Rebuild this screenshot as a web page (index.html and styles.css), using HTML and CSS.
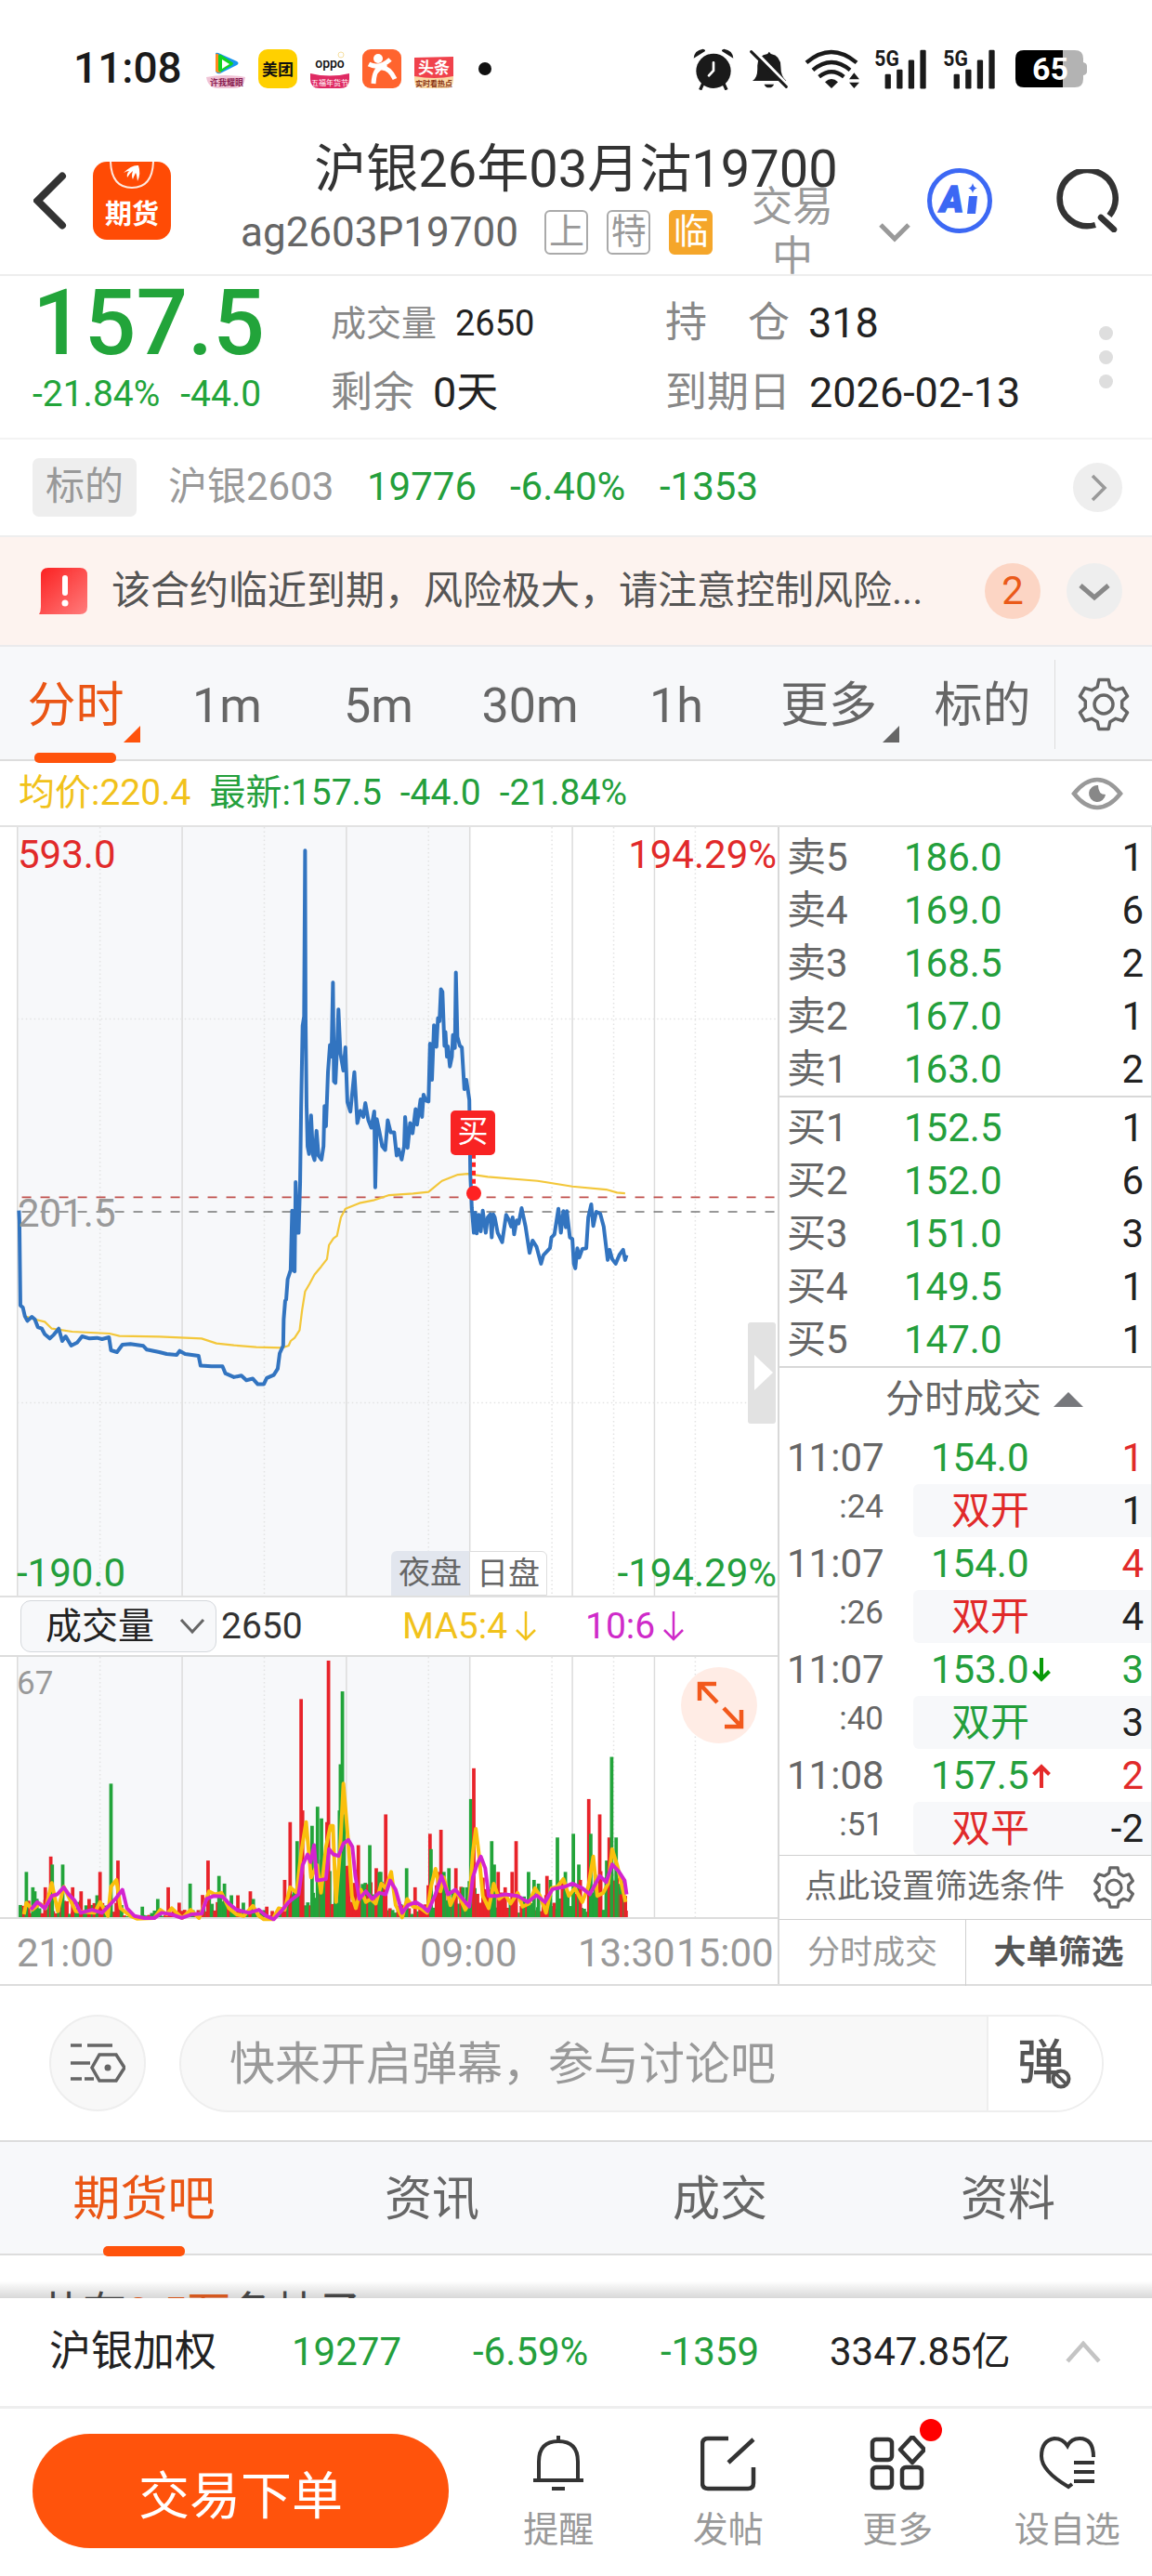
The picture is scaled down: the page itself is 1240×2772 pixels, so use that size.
FILE: index.html
```html
<!DOCTYPE html>
<html lang="zh-CN">
<head>
  <meta charset="UTF-8">
  <meta name="viewport" content="width=device-width, initial-scale=1.0">
  <title>沪银26年03月沽19700</title>
  <link rel="stylesheet" href="styles.css">
</head>
<body>
  <svg class="defs" width="0" height="0">
    <symbol id="gear" viewBox="0 0 60 60">
      <path d="M24.8 3.5H35.2L36.8 11.2L42.9 14.7L50.4 12.3L55.5 21.2L49.7 26.5V33.5L55.5 38.8L50.4 47.7L42.9 45.3L36.8 48.8L35.2 56.5H24.8L23.2 48.8L17.1 45.3L9.6 47.7L4.5 38.8L10.3 33.5V26.5L4.5 21.2L9.6 12.3L17.1 14.7L23.2 11.2Z"/>
      <circle cx="30" cy="30" r="10"/>
    </symbol>
  </svg>

  <div class="status-bar">
    <span class="clock">11:08</span>
    <div class="app-icons">
      <svg viewBox="0 0 42 42"><path d="M10 5q0-2 3-1L33 13q3 2 0 4L15 26q-4 1-5-3z" fill="#1697ee"/><path d="M10 6q0-2 3-1l3 20q-5 1-6-2z" fill="#ff8a1c"/><path d="M13 7q1-2 3-1l12 8q2 1 0 3l-12 7q-3 1-3-2z" fill="#12d321"/><path d="M17 11l8 5-8 5z" fill="#fff"/><path d="M0 30q20-4 42 0-1 12-12 12H13Q2 42 0 30z" fill="#f0c3d6"/><text x="22" y="39" font-size="9" font-weight="700" fill="#8a1c50" text-anchor="middle">许我耀眼</text></svg>
      <svg viewBox="0 0 42 42"><rect width="42" height="42" rx="10" fill="#ffd000"/><text x="21" y="28" font-size="17" font-weight="700" fill="#111" text-anchor="middle">美团</text></svg>
      <svg viewBox="0 0 42 42"><text x="21" y="20" font-size="14" font-weight="500" fill="#111" text-anchor="middle">oppo</text><circle cx="33" cy="6" r="3" fill="none" stroke="#f6dfa0"/><path d="M0 26q21 5 42 0v6q0 10-10 10H10Q0 42 0 32z" fill="#df2a63"/><text x="21" y="39" font-size="8" fill="#fff" text-anchor="middle">五福年货节</text></svg>
      <svg viewBox="0 0 42 42"><rect width="42" height="42" rx="9" fill="#ff642e"/><circle cx="17" cy="10" r="5" fill="#fff"/><path d="M7 16q11 6 23-5M12 37q1-16 8-17 9-1 15 12M17 17v5q4-4 9-6" fill="none" stroke="#fff" stroke-width="5"/></svg>
      <svg viewBox="0 0 42 42"><path d="M0 28h42v5q0 9-9 9H9q-9 0-9-9z" fill="#fbd9a5"/><path d="M0 9l42-1v21q-20 4-42 0z" fill="#f0424c"/><text x="21" y="26" font-size="17" font-weight="700" fill="#fff" text-anchor="middle">头条</text><text x="21" y="40" font-size="8" font-weight="700" fill="#8a3413" text-anchor="middle">实时看热点</text></svg>
    </div>
    <span class="more-dot"></span>
    <div class="sys-icons">
      <svg class="alarm" viewBox="80 34 132 135"><circle cx="146" cy="107" r="56"/><path d="M112 148l-9 20M179 148l9 20" stroke="#1a1a1a" stroke-width="10"/><path d="M82 66q2-26 30-30 10 2 6 8zM210 66q-2-26-30-30-10 2-6 8z"/><path d="M146 80v26l-15 16" fill="none" stroke="#fff" stroke-width="8" stroke-linecap="round"/></svg>
      <svg class="mute" viewBox="264 36 124 128"><path d="M273 138q16-10 16-38v-12q2-34 33-38l5-7 6 7q32 6 32 42 0 32 18 46z"/><path d="M311 149h32q-4 11-16 11t-16-11z"/><path d="M277 37l114 118" stroke="#fff" stroke-width="10"/><path d="M269 43l114 114" stroke="#1a1a1a" stroke-width="9" stroke-linecap="round"/></svg>
      <svg class="wifi" viewBox="440 34 180 132"><g fill="none" stroke="#1a1a1a" stroke-width="13"><path d="M446 80q80-68 162 0"/><path d="M467 104q60-50 120 0"/><path d="M487 126q40-32 80 0"/></g><path d="M506 143q21-20 42 0l-21 20zM584 134l16-21 17 21zM584 144l16 19 17-19z"/></svg>
      <svg class="signal" viewBox="666 34 172 132"><text x="667" y="92" font-size="72" font-weight="700" textLength="80" lengthAdjust="spacingAndGlyphs">5G</text><rect x="701" y="117" width="19" height="48" rx="4"/><rect x="739" y="102" width="19" height="63" rx="4"/><rect x="777" y="71" width="19" height="94" rx="4"/><rect x="815" y="39" width="19" height="126" rx="4"/></svg>
      <svg class="signal" viewBox="666 34 172 132"><text x="667" y="92" font-size="72" font-weight="700" textLength="80" lengthAdjust="spacingAndGlyphs">5G</text><rect x="701" y="117" width="19" height="48" rx="4"/><rect x="739" y="102" width="19" height="63" rx="4"/><rect x="777" y="71" width="19" height="94" rx="4"/><rect x="815" y="39" width="19" height="126" rx="4"/></svg>
      <svg class="battery" viewBox="0 0 77 40"><path d="M51 0h13q9 0 9 9v4q4 1 4 4v6q0 3-4 4v4q0 9-9 9H51z" fill="#b3b3b3"/><path d="M51 0H9Q0 0 0 9v22q0 9 9 9h42z" fill="#000"/><text x="37.500" y="32" font-size="34" font-weight="700" fill="#fff" text-anchor="middle">65</text></svg>
    </div>
  </div>

  <header>
    <svg class="back" viewBox="0 0 36 62"><path d="M31 4.500L4.500 31 31 57.500" fill="none" stroke="#333" stroke-width="8" stroke-linecap="round"/></svg>
    <svg class="logo" viewBox="0 0 84 84"><rect width="84" height="84" rx="15" fill="#ff4b05"/><path d="M19 0q1 28 23 28T65 0" fill="none" stroke="#ffe9df" stroke-width="2"/><path d="M33 12Q42 3 49 4q3 9-1 17-1-8-2-9-2 4-3 7-2-3 0-9-4 3-6 7-1-4 2-7-3 0-6 2z" fill="#fff"/><text x="42" y="67" font-size="29" font-weight="700" fill="#fff" text-anchor="middle">期货</text></svg>
    <div class="titles">
      <h1>沪银26年03月沽19700</h1>
      <div class="subtitle">
        <span class="code">ag2603P19700</span>
        <span class="tag">上</span>
        <span class="tag">特</span>
        <span class="tag tag-warn">临</span>
        <span class="state">交易中</span>
        <svg class="chev" viewBox="0 0 36 22"><path d="M3 3l15 15L33 3" fill="none" stroke="#999" stroke-width="5"/></svg>
      </div>
    </div>
    <svg class="ai" viewBox="0 0 70 70"><circle cx="35" cy="35" r="32.500" fill="#fff" stroke="#3c68f4" stroke-width="5"/><text x="14" y="47" font-size="38" font-weight="900" fill="#3c68f4" stroke="#3c68f4" stroke-width="1.500" font-style="italic" textLength="25" lengthAdjust="spacingAndGlyphs">A</text><path d="M45 30h9l-2 19h-9z" fill="#3c68f4"/><path d="M49 16q1 5 5 5.500-4 .500-5 5.500-1-5-5-5.500 4-.500 5-5.500z" fill="#3c68f4"/></svg>
    <svg class="search" viewBox="0 0 68 68"><path d="M43 60A30 30 0 1 1 58 50" fill="none" stroke="#333" stroke-width="6.500"/><path d="M49 52l14 13" stroke="#333" stroke-width="6.500" stroke-linecap="round"/></svg>
  </header>

  <section class="quote">
    <div class="last">
      <div class="price">157.5</div>
      <div class="change"><span>-21.84%</span><span>-44.0</span></div>
    </div>
    <div class="col">
      <div class="item small"><span class="label">成交量</span><span>2650</span></div>
      <div class="item"><span class="label">剩余</span><span>0天</span></div>
    </div>
    <div class="col col-wide">
      <div class="item"><span class="label spread"><i>持</i><i>仓</i></span><span>318</span></div>
      <div class="item"><span class="label">到期日</span><span>2026-02-13</span></div>
    </div>
    <div class="dots"><i></i><i></i><i></i></div>
  </section>

  <section class="underlying">
    <span class="badge">标的</span>
    <span class="name">沪银2603</span>
    <span class="green u1">19776</span>
    <span class="green u2">-6.40%</span>
    <span class="green u3">-1353</span>
    <span class="round"><svg viewBox="0 0 53 53"><path d="M21 14l13 13-13 13" fill="none" stroke="#999" stroke-width="3.500"/></svg></span>
  </section>

  <section class="notice">
    <svg class="warn" viewBox="0 0 52 50"><defs><linearGradient id="wg" x1="0" y1="0" x2="1" y2="1"><stop offset="0" stop-color="#fb2020"/><stop offset="1" stop-color="#ff7c7c"/></linearGradient></defs><path d="M10 0h34q8 0 8 8v34q0 8-8 8H0q2-3 2-8V8q0-8 8-8z" fill="url(#wg)"/><path d="M28 11v16" stroke="#fff" stroke-width="6" stroke-linecap="round"/><circle cx="28" cy="38" r="3.500" fill="#fff"/></svg>
    <span class="notice-text">该合约临近到期，风险极大，请注意控制风险...</span>
    <span class="count">2</span>
    <span class="down"><svg viewBox="0 0 60 60"><path d="M15 24l15 13 15-13" fill="none" stroke="#888" stroke-width="5"/></svg></span>
  </section>

  <nav class="periods">
    <span class="p p-active">分时<svg class="tri" viewBox="0 0 18 18"><path d="M18 0v18H0z"/></svg></span>
    <span class="p">1m</span>
    <span class="p">5m</span>
    <span class="p">30m</span>
    <span class="p">1h</span>
    <span class="p">更多<svg class="tri" viewBox="0 0 18 18"><path d="M18 0v18H0z"/></svg></span>
    <span class="p">标的</span>
    <span class="setting"><svg class="gear"><use href="#gear"/></svg></span>
  </nav>

  <div class="info">
    <span class="yellow">均价:220.4</span>
    <span class="green">最新:157.5</span>
    <span class="green">-44.0</span>
    <span class="green">-21.84%</span>
    <svg class="eye" viewBox="0 0 56 36"><path d="M3 18Q15 3 28 3t25 15Q41 33 28 33T3 18z" fill="none" stroke="#999" stroke-width="4.500"/><path d="M29 9a9 9 0 1 0 8 10q-8 0-8-10z" fill="#888"/></svg>
  </div>

  <main class="trade">
    <div class="charts">
      <div class="chart price-chart">
        <svg viewBox="0 27 1562.400 2487" preserveAspectRatio="none">
          <rect x="35" y="27" width="909" height="2487" fill="#f7f8fa"/>
          <g class="grid"><path d="M35 27V2514M366 27V2514M696 27V2514M944 27V2514M1150 27V2514M1315 27V2514"/></g>
          <g class="grid dotted"><path d="M201 27V2514M531 27V2514M861 27V2514M1109 27V2514M1233 27V2514M1397 27V2514M35 648H1562M35 1890H1562"/></g>
          <path class="dash" stroke="#c0504d" d="M44 1225H1562"/>
          <path class="dash" stroke="#777" d="M44 1272H1562"/>
          <polyline class="avg" points="50,1610 70,1620 90,1628 104,1650 145,1660 220,1666 240,1674 320,1676 405,1682 435,1698 470,1704 515,1710 568,1712 580,1705 584,1690 592,1680 602,1655 607,1590 613,1530 622,1505 632,1475 645,1450 657,1425 661,1380 670,1358 677,1350 685,1290 694,1262 722,1244 750,1235 782,1218 830,1213 861,1208 888,1172 920,1152 940,1149 980,1159 1080,1172 1150,1190 1218,1200 1240,1210 1256,1212"/>
          <polyline class="line" points="38,1268 39,1300 41,1575 46,1582 50,1610 55,1625 64,1612 70,1620 76,1645 84,1650 90,1668 100,1682 108,1670 118,1650 125,1690 132,1675 143,1705 155,1695 165,1675 180,1682 195,1680 205,1684 219,1678 223,1720 235,1726 246,1702 262,1700 288,1706 295,1718 320,1726 335,1732 355,1735 361,1722 372,1732 399,1738 403,1770 425,1772 447,1772 453,1795 470,1807 485,1802 495,1817 508,1812 518,1830 530,1830 536,1810 550,1800 558,1780 562,1730 569,1705 570,1620 573,1560 575,1556 578,1490 584,1460 587,1268 589,1460 592,1465 594,1176 597,1340 600,1340 603,1180 605,940 608,670 611,640 613,103 614,640 616,930 618,1060 621,1085 625,960 629,1090 632,1105 636,1010 640,1090 646,1103 650,1060 652,930 655,995 659,820 663,732 666,770 669,530 671,850 674,855 677,750 680,617 684,760 690,815 694,740 698,917 704,948 712,820 718,985 724,945 730,965 734,920 740,975 746,1000 752,947 754,1193 757,972 762,1010 768,1060 774,1072 779,976 785,1015 792,1015 797,1090 801,1070 807,1103 812,1060 814,965 819,1065 824,985 829,1018 835,940 838,990 845,908 848,965 851,893 856,912 861,915 864,728 868,845 872,668 877,738 880,645 883,655 886,552 889,560 893,735 895,690 898,770 900,737 904,802 908,770 910,700 914,742 916,498 919,705 924,735 928,740 933,875 937,845 943,910 945,1150 948,1260 952,1340 955,1275 958,1342 962,1282 966,1335 970,1268 976,1340 980,1290 985,1280 988,1355 991,1280 994,1290 1000,1340 1009,1370 1017,1282 1023,1300 1027,1320 1030,1290 1033,1345 1038,1300 1042,1310 1048,1260 1056,1320 1064,1405 1070,1365 1078,1385 1087,1440 1092,1412 1105,1390 1108,1355 1114,1345 1122,1262 1127,1340 1132,1270 1137,1322 1139,1270 1145,1355 1150,1360 1153,1440 1156,1455 1160,1390 1164,1420 1170,1392 1178,1390 1182,1290 1188,1248 1192,1318 1198,1272 1206,1278 1213,1320 1221,1428 1225,1395 1230,1425 1237,1440 1245,1410 1252,1395 1256,1428 1259,1412"/>
          <path d="M952 1085V1195" fill="none" stroke="#f22" stroke-width="4" stroke-dasharray="5 4" vector-effect="non-scaling-stroke"/>
          <ellipse cx="952" cy="1212" rx="15" ry="24" fill="#f22"/>
        </svg>
        <span class="mark top-left red">593.0</span>
        <span class="mark top-right red">194.29%</span>
        <span class="mark middle">201.5</span>
        <span class="mark bottom-left green">-190.0</span>
        <span class="mark bottom-right green">-194.29%</span>
        <span class="buy">买</span>
        <span class="session"><b>夜盘</b><b>日盘</b></span>
        <span class="handle"><svg viewBox="0 0 20 38"><path d="M0 0l20 19L0 38z" fill="#fff"/></svg></span>
      </div>

      <div class="vol-head">
        <span class="vol-select">成交量<svg viewBox="0 0 28 18"><path d="M2 2l12 13L26 2" fill="none" stroke="#666" stroke-width="3"/></svg></span>
        <span class="vol-num">2650</span>
        <span class="ma yellow">MA5:4<svg viewBox="0 0 22 32"><path d="M11 0v30M1 20l10 10 10-10"/></svg></span>
        <span class="ma purple">10:6<svg viewBox="0 0 22 32"><path d="M11 0v30M1 20l10 10 10-10"/></svg></span>
      </div>

      <div class="chart vol-chart">
        <svg viewBox="0 213 1562.400 846" preserveAspectRatio="none">
          <rect x="35" y="213" width="909" height="846" fill="#f7f8fa"/>
          <g class="grid"><path d="M35 213V1059M366 213V1059M696 213V1059M944 213V1059M1150 213V1059M1315 213V1059"/></g>
          <g class="grid dotted"><path d="M201 213V1059M531 213V1059M861 213V1059M1109 213V1059M1233 213V1059M1397 213V1059"/></g>
          <g id="bars"></g>
          <polyline class="ma5" points="48,1050 53,1012 65,1035 80,1015 92,1030 104,948 116,1040 128,960 140,1000 152,1040 190,1045 201,1010 217,1055 223,960 234,938 242,1030 262,1055 275,1064 310,1062 322,1035 335,1050 345,1030 358,1050 366,1062 383,1035 400,1062 410,1020 420,975 432,985 445,980 460,1030 475,1050 490,1055 508,1022 520,1055 530,1066 548,1066 560,1030 572,1035 583,962 596,980 605,850 615,750 625,930 637,890 645,980 655,830 664,762 669,762 675,1010 683,850 690,625 700,820 707,990 715,1030 725,970 735,1010 745,1000 755,1015 766,950 775,965 786,912 795,1020 808,1060 818,1000 830,1025 845,1030 858,1045 866,960 875,902 885,975 892,930 905,1020 918,975 935,1035 943,1010 950,850 956,772 962,850 970,990 982,1030 992,950 1003,1000 1015,985 1026,1015 1040,980 1050,1025 1063,1015 1075,965 1085,990 1097,1045 1108,965 1120,960 1132,935 1143,990 1155,965 1170,1010 1182,960 1192,862 1200,990 1212,980 1222,950 1230,838 1240,890 1250,960 1257,1010"/>
          <polyline class="ma10" points="62,1035 75,1010 90,1030 104,990 115,985 128,962 138,985 150,1005 162,1045 185,1035 205,1045 220,1020 232,1000 246,970 255,1030 270,1055 290,1062 310,1062 325,1045 345,1050 365,1062 385,1050 405,1048 415,1000 430,990 447,992 460,1015 475,1035 500,1045 520,1035 535,1055 550,1066 565,1040 580,1010 600,985 608,890 618,855 624,880 631,825 637,940 655,935 661,838 670,855 680,860 690,820 700,808 708,830 714,925 722,1000 735,975 748,1000 762,980 775,985 784,940 795,970 808,1045 820,1020 835,1010 850,1025 860,1040 875,985 887,925 900,985 915,970 930,1000 943,1025 950,930 958,890 966,862 975,900 982,990 1000,990 1015,985 1040,990 1060,1010 1078,988 1095,1010 1110,968 1135,960 1150,950 1170,965 1185,985 1205,925 1218,945 1230,888 1243,910 1255,940 1259,985"/>
        </svg>
        <span class="vol-max">67</span>
        <span class="expand"><svg viewBox="0 0 82 82"><path d="M20 36V18h18M20 18l19 20M46 44l19 20M65 46v18H47" fill="none" stroke="#f2591c" stroke-width="4.500"/></svg></span>
      </div>

      <div class="axis">
        <span>21:00</span><span>09:00</span><span>13:30</span><span>15:00</span>
      </div>
    </div>

    <aside class="book">
      <div class="levels">
        <div class="level"><span>卖5</span><span class="green">186.0</span><span>1</span></div>
        <div class="level"><span>卖4</span><span class="green">169.0</span><span>6</span></div>
        <div class="level"><span>卖3</span><span class="green">168.5</span><span>2</span></div>
        <div class="level"><span>卖2</span><span class="green">167.0</span><span>1</span></div>
        <div class="level"><span>卖1</span><span class="green">163.0</span><span>2</span></div>
      </div>
      <div class="levels">
        <div class="level"><span>买1</span><span class="green">152.5</span><span>1</span></div>
        <div class="level"><span>买2</span><span class="green">152.0</span><span>6</span></div>
        <div class="level"><span>买3</span><span class="green">151.0</span><span>3</span></div>
        <div class="level"><span>买4</span><span class="green">149.5</span><span>1</span></div>
        <div class="level"><span>买5</span><span class="green">147.0</span><span>1</span></div>
      </div>
      <div class="ticks-title">分时成交<svg viewBox="0 0 32 16"><path d="M16 0l16 16H0z" fill="#77787c"/></svg></div>
      <div class="ticks">
        <div class="tick"><span>11:07</span><span class="green">154.0</span><span class="red">1</span></div>
        <div class="tick-sub"><span>:24</span><div><span class="red">双开</span><span>1</span></div></div>
        <div class="tick"><span>11:07</span><span class="green">154.0</span><span class="red">4</span></div>
        <div class="tick-sub"><span>:26</span><div><span class="red">双开</span><span>4</span></div></div>
        <div class="tick"><span>11:07</span><span class="green">153.0<svg viewBox="0 0 20 26"><path d="M10 0v23M1.500 14.500L10 23l8.500-8.500" stroke="#089a08"/></svg></span><span class="green">3</span></div>
        <div class="tick-sub"><span>:40</span><div><span class="green">双开</span><span>3</span></div></div>
        <div class="tick"><span>11:08</span><span class="green">157.5<svg viewBox="0 0 20 26"><path d="M10 26V3M1.500 11.500L10 3l8.500 8.500" stroke="#e52a2a"/></svg></span><span class="red">2</span></div>
        <div class="tick-sub"><span>:51</span><div><span class="red">双平</span><span>-2</span></div></div>
      </div>
      <div class="filter">点此设置筛选条件<svg class="gear gear-small"><use href="#gear"/></svg></div>
      <div class="book-tabs"><span>分时成交</span><span class="on">大单筛选</span></div>
    </aside>
  </main>

  <section class="danmu">
    <span class="danmu-set"><svg viewBox="0 0 60 44"><g fill="none" stroke="#666" stroke-width="3.500"><path d="M1 3h12M19 3h27M1 22h21M1 39h12M16 39h10"/><path d="M32 13h18l9 14-9 14H32l-8-14z"/></g><circle cx="41" cy="27" r="3.500" fill="#666"/></svg></span>
    <div class="danmu-box">
      <span class="danmu-input">快来开启弹幕，参与讨论吧</span>
      <span class="danmu-btn">弹<svg viewBox="0 0 24 24"><circle cx="12" cy="12" r="8.500" fill="#fff" stroke="#555" stroke-width="4"/><path d="M6 6l12 12" stroke="#555" stroke-width="3.500"/></svg></span>
    </div>
  </section>

  <nav class="tabs">
    <span class="tab-on">期货吧</span>
    <span>资讯</span>
    <span>成交</span>
    <span>资料</span>
  </nav>

  <div class="feed">共有<em>3.5万</em>条帖子</div>

  <div class="index-bar">
    <span class="i-name">沪银加权</span>
    <span class="green i1">19277</span>
    <span class="green i2">-6.59%</span>
    <span class="green i3">-1359</span>
    <span class="i4">3347.85亿</span>
    <svg viewBox="0 0 38 24"><path d="M2 22L19 3l17 19" fill="none" stroke="#c4c4c4" stroke-width="4.500"/></svg>
  </div>

  <footer>
    <button class="order">交易下单</button>
    <div class="actions">
      <span class="action"><svg viewBox="0 0 60 60"><g fill="none" stroke="#333" stroke-width="4"><path d="M30 0v6M9 48V28Q9 6 30 6t21 22v20M3 48h54M23 57h14"/></g></svg>提醒</span>
      <span class="action"><svg viewBox="0 0 60 60"><path d="M30 3H8q-6 0-6 6v42q0 6 6 6h43q6 0 6-6V34M30 29L57 4" fill="none" stroke="#333" stroke-width="4.500"/></svg>发帖</span>
      <span class="action"><svg viewBox="0 0 60 60"><g fill="none" stroke="#333" stroke-width="4.500"><rect x="3" y="4" width="21" height="22" rx="4"/><rect x="3" y="34" width="21" height="22" rx="4"/><rect x="35" y="34" width="21" height="22" rx="4"/><path d="M46 1l13 14-13 14-13-14z" stroke-linejoin="round"/></g></svg>更多<i class="red-dot"></i></span>
      <span class="action"><svg viewBox="0 0 60 60"><path d="M58 23Q58 3 43 3q-9 0-13 8Q25 3 16 3 2 5 2 22q0 16 29 33l4-3M37 29h22M37 39h22M37 49h22" fill="none" stroke="#333" stroke-width="4"/></svg>设自选</span>
    </div>
  </footer>

  <script src="script.js"></script>
</body>
</html>
```

FILE: styles.css
```css
* {
  box-sizing: border-box;
}

body {
  margin: 0;
  width: 1240px;
  height: 2772px;
  overflow: hidden;
  background: #fff;
  color: #222;
  font-family: Roboto, 'Noto Sans CJK SC', sans-serif;
  font-size: 42px;
  line-height: 1.2;
  display: flex;
  flex-direction: column;
}

body > * {
  flex-shrink: 0;
}

svg {
  display: block;
  flex-shrink: 0;
}

.defs {
  position: absolute;
}

i, em {
  font-style: normal;
}

.green {
  color: #249f3c;
}

.red {
  color: #e12a2a;
}

.yellow {
  color: #f1c21b;
}

.purple {
  color: #cf2bc9;
}

/* status bar */
.status-bar {
  height: 110px;
  padding: 38px 70px 0 79px;
  display: flex;
  align-items: center;
}

.clock {
  width: 143px;
  font-size: 46px;
  font-weight: 500;
  color: #1a1a1a;
}

.app-icons {
  display: flex;
  gap: 14px;
}

.app-icons svg {
  width: 42px;
  height: 42px;
}

.more-dot {
  width: 14px;
  height: 14px;
  border-radius: 50%;
  background: #111;
  margin-left: 27px;
}

.sys-icons {
  margin-left: auto;
  display: flex;
  align-items: center;
  fill: #1a1a1a;
}

.alarm { width: 44px; height: 45px; margin-right: 17px; }
.mute { width: 41px; height: 43px; margin-right: 18px; }
.wifi { width: 60px; height: 44px; margin-right: 15px; }
.signal { width: 57px; height: 44px; margin-right: 17px; }
.battery { width: 77px; height: 40px; margin-left: 4px; }

/* header */
header {
  height: 187px;
  padding: 27px 0 0 36px;
  border-bottom: 2px solid #ededed;
  display: flex;
  align-items: center;
}

.back { width: 36px; height: 62px; }
.logo { width: 84px; height: 84px; margin-left: 28px; }

.titles {
  width: 722px;
  margin-left: 75px;
  text-align: center;
}

h1 {
  margin: 0;
  font-size: 56px;
  font-weight: 400;
  line-height: 68px;
  color: #333;
  white-space: nowrap;
}

.subtitle {
  display: flex;
  align-items: center;
  height: 68px;
  font-size: 44px;
  color: #999;
}

.code {
  width: 328px;
  text-align: left;
  color: #666;
}

.tag {
  width: 47px;
  height: 48px;
  margin-right: 20px;
  border: 2px solid #aaa;
  border-radius: 6px;
  font-size: 38px;
  line-height: 43px;
  text-align: center;
}

.tag-warn {
  border-color: #f5a62a;
  background: #f5a62a;
  color: #fff;
}

.state { font-size: 44px; }
.chev { width: 36px; height: 22px; margin-left: 26px; }
.ai { width: 70px; height: 70px; margin-left: 17px; }
.search { width: 68px; height: 68px; margin-left: 68px; }

/* quote */
.quote {
  height: 176px;
  padding: 12px 0 0 35px;
  border-bottom: 2px solid #f3f3f3;
  display: flex;
}

.last { width: 321px; color: #22a43a; }

.price {
  font-size: 98px;
  font-weight: 500;
  line-height: 78px;
}

.change {
  display: flex;
  gap: 22px;
  font-size: 39px;
  line-height: 74px;
}

.col { width: 360px; }
.col-wide { width: 467px; }

.item {
  display: flex;
  gap: 20px;
  font-size: 45px;
  line-height: 78px;
}

.item + .item { line-height: 72px; }

.small { font-size: 38px; }

.label { color: #888; }

.spread {
  width: 134px;
  display: flex;
  justify-content: space-between;
}

.dots {
  padding-top: 42px;
}

.dots i {
  display: block;
  width: 15px;
  height: 15px;
  margin-bottom: 11px;
  border-radius: 50%;
  background: #dedede;
}

.underlying {
  height: 105px;
  padding: 0 32px 0 35px;
  border-bottom: 2px solid #eee;
  display: flex;
  align-items: center;
}

.badge {
  width: 112px;
  height: 63px;
  border-radius: 7px;
  background: #eee;
  color: #999;
  text-align: center;
  line-height: 61px;
}

.name { width: 214px; margin-left: 34px; color: #999; }
.u1 { width: 154px; }
.u2 { width: 161px; }

.round {
  width: 53px;
  height: 53px;
  border-radius: 50%;
  background: #eee;
  margin-left: auto;
}

.notice {
  height: 118px;
  padding: 0 32px 0 42px;
  border-bottom: 2px solid #eaeaec;
  background: #fdf3ef;
  display: flex;
  align-items: center;
}

.warn { width: 52px; height: 50px; }

.notice-text {
  margin-left: 26px;
  width: 940px;
  color: #555;
  white-space: nowrap;
}

.count {
  width: 60px;
  height: 60px;
  border-radius: 50%;
  background: #fcd5c4;
  color: #ea5a19;
  text-align: center;
  line-height: 60px;
}

.down {
  width: 60px;
  height: 60px;
  margin-left: 28px;
  border-radius: 50%;
  background: #eee;
}

/* period tabs */
.periods {
  height: 123px;
  background: #f7f8fa;
  border-bottom: 2px solid #ddd;
  display: grid;
  grid-template-columns: 163px 163px 163px 163px 152px 176px 155px 105px;
  font-size: 52px;
  color: #666;
}

.p {
  position: relative;
  text-align: center;
  line-height: 128px;
}

.p-active { color: #ea5514; }

.p-active::after {
  content: '';
  position: absolute;
  left: 37px;
  bottom: 3px;
  width: 88px;
  height: 11px;
  border-radius: 5px;
  background: #ff530c;
}

.tri {
  position: absolute;
  right: 12px;
  bottom: 25px;
  width: 18px;
  height: 18px;
  fill: #666;
}

.p-active .tri { fill: #ff530c; }

.setting {
  height: 96px;
  margin-top: 14px;
  border-left: 1px solid #ddd;
  display: flex;
  align-items: center;
  justify-content: center;
}

.gear {
  width: 60px;
  height: 60px;
  fill: none;
  stroke: #666;
  stroke-width: 3.5px;
  stroke-linejoin: round;
}

.info {
  height: 71px;
  padding: 0 31px 0 20px;
  border-bottom: 2px solid #e2e2e2;
  display: flex;
  align-items: center;
  gap: 20px;
  font-size: 39px;
}

.eye { width: 56px; height: 36px; margin-left: auto; }

/* charts */
.trade {
  height: 1247px;
  border-bottom: 2px solid #ddd;
  display: flex;
}

.charts { width: 837px; }

.chart { position: relative; }

.chart > svg {
  width: 837px;
  height: 100%;
  overflow: visible;
}

.price-chart {
  height: 829px;
  border-bottom: 2px solid #e0e0e0;
}

.grid path {
  fill: none;
  stroke: #dcdcdc;
  stroke-width: 1.5px;
  vector-effect: non-scaling-stroke;
}

.dotted path {
  stroke: #e3e3e3;
  stroke-dasharray: 1.5 3;
}

.dash {
  fill: none;
  stroke-width: 1.6px;
  stroke-dasharray: 10 10;
  vector-effect: non-scaling-stroke;
}

.line, .avg, .ma5, .ma10 {
  fill: none;
  stroke-width: 4px;
  stroke-linejoin: round;
  vector-effect: non-scaling-stroke;
}

.line { stroke: #3274c0; }
.avg { stroke: #f3c73a; stroke-width: 2.2px; }
.ma5 { stroke: #fabf0c; }
.ma10 { stroke: #d324cf; }

.mark {
  position: absolute;
  line-height: 50px;
}

.top-left { left: 19px; top: 5px; }
.top-right { right: 1px; top: 5px; }
.middle { left: 19px; top: 391px; color: #999; }
.bottom-left { left: 18px; bottom: -1px; }
.bottom-right { right: 1px; bottom: -1px; }

.buy {
  position: absolute;
  left: 485px;
  top: 305px;
  width: 48px;
  height: 48px;
  border-radius: 5px;
  background: #f82323;
  color: #fff;
  font-size: 33px;
  line-height: 45px;
  text-align: center;
}

.session {
  position: absolute;
  left: 421px;
  bottom: 0;
  display: flex;
  font-size: 34px;
  color: #666;
}

.session b {
  width: 84px;
  height: 48px;
  border-radius: 6px 0 0 0;
  background: #e2e6ee;
  font-weight: 400;
  text-align: center;
  line-height: 46px;
}

.session b + b {
  border: 1px solid #ddd;
  border-radius: 0 6px 0 0;
  background: #fff;
}

.handle {
  position: absolute;
  right: 2px;
  top: 533px;
  width: 30px;
  height: 109px;
  border-radius: 3px;
  background: #e2e2e2;
  padding: 35px 0 0 7px;
}

.handle svg { width: 20px; height: 38px; }

.vol-head {
  height: 64px;
  padding-left: 22px;
  border-bottom: 2px solid #ddd;
  display: flex;
  align-items: center;
  font-size: 39px;
}

.vol-select {
  width: 211px;
  height: 56px;
  border: 1px solid #d5d8dc;
  border-radius: 11px;
  background: #f7f8fa;
  padding-left: 26px;
  display: flex;
  align-items: center;
}

.vol-select svg { width: 28px; height: 18px; margin-left: 27px; }

.vol-num { margin-left: 5px; width: 195px; color: #333; }

.ma {
  display: flex;
  align-items: center;
  width: 197px;
}

.ma svg {
  width: 22px;
  height: 32px;
  margin-left: 9px;
  fill: none;
  stroke: currentColor;
  stroke-width: 2.5px;
}

.vol-chart {
  height: 282px;
  border-bottom: 2px solid #ddd;
}

.vol-max {
  position: absolute;
  left: 18px;
  top: 8px;
  font-size: 35px;
  color: #999;
}

.expand {
  position: absolute;
  left: 733px;
  top: 11px;
  width: 82px;
  height: 82px;
  border-radius: 50%;
  background: #ffece5;
}

.axis {
  display: flex;
  color: #999;
  line-height: 73px;
  padding-left: 18px;
}

.axis span { width: 106px; }
.axis span:nth-child(1) { width: 434px; }
.axis span:nth-child(2) { width: 170px; }

/* order book */
.book {
  width: 403px;
  border-left: 2px solid #d8d8d8;
  border-right: 1px solid #d8d8d8;
}

.levels {
  height: 291px;
  padding-top: 4px;
  border-bottom: 2px solid #d8d8d8;
  line-height: 57px;
}

.level, .tick {
  height: 57px;
  padding: 0 8px 0 8px;
  display: grid;
  grid-template-columns: 126px 1fr 60px;
}

.level span:first-child { color: #666; }

.level span:last-child, .tick span:last-child { text-align: right; }

.ticks-title {
  height: 68px;
  padding-left: 114px;
  display: flex;
  align-items: center;
  color: #666;
}

.ticks-title svg { width: 32px; height: 16px; margin-left: 13px; }

.ticks { line-height: 57px; }

.tick { grid-template-columns: 155px 1fr 60px; }

.tick span:first-child { color: #666; }

.tick span:nth-child(2) {
  display: flex;
  align-items: center;
}

.tick svg {
  width: 20px;
  height: 26px;
  margin-left: 3px;
  fill: none;
  stroke-width: 4px;
}

.tick-sub {
  height: 57px;
  display: flex;
}

.tick-sub > span {
  width: 144px;
  padding-right: 32px;
  text-align: right;
  font-size: 35px;
  line-height: 50px;
  color: #666;
}

.tick-sub > div {
  flex: 1;
  border-radius: 6px 0 0 6px;
  background: #f7f8fa;
  padding: 0 8px 0 41px;
  display: flex;
  justify-content: space-between;
}

.filter {
  height: 70px;
  padding-left: 27px;
  border-top: 1px solid #d0d0d0;
  border-bottom: 1px solid #d0d0d0;
  display: flex;
  align-items: center;
  font-size: 35px;
  color: #666;
}

.gear-small { width: 48px; height: 48px; margin-left: 29px; stroke-width: 4px; }

.book-tabs {
  display: grid;
  grid-template-columns: 1fr 1fr;
  font-size: 35px;
  line-height: 71px;
  text-align: center;
  color: #999;
}

.book-tabs .on {
  border-left: 1px solid #d0d0d0;
  font-weight: 700;
  color: #555;
}

/* danmu */
.danmu {
  height: 168px;
  padding: 0 52px 0 53px;
  border-bottom: 2px solid #ddd;
  display: flex;
  align-items: center;
}

.danmu-set {
  width: 104px;
  height: 104px;
  margin-right: 36px;
  border: 2px solid #eee;
  border-radius: 50%;
  background: #f8f8f8;
  display: flex;
  align-items: center;
  justify-content: center;
}

.danmu-set svg { width: 60px; height: 44px; }

.danmu-box {
  flex: 1;
  height: 105px;
  border: 2px solid #eee;
  border-radius: 53px;
  background: #f8f8f8;
  overflow: hidden;
  display: flex;
}

.danmu-input {
  width: 867px;
  padding-left: 52px;
  font-size: 49px;
  line-height: 103px;
  color: #999;
}

.danmu-btn {
  position: relative;
  flex: 1;
  padding-left: 31px;
  border-left: 2px solid #eee;
  background: #fff;
  font-size: 51px;
  font-weight: 500;
  line-height: 99px;
  color: #555;
}

.danmu-btn svg {
  position: absolute;
  left: 66px;
  top: 55px;
  width: 24px;
  height: 24px;
}

.tabs {
  height: 122px;
  border-bottom: 2px solid #ddd;
  background: #f7f8fa;
  display: grid;
  grid-template-columns: repeat(4, 1fr);
  font-size: 51px;
  line-height: 124px;
  text-align: center;
  color: #666;
}

.tab-on { position: relative; color: #ea5514; }

.tab-on::after {
  content: '';
  position: absolute;
  left: 111px;
  bottom: 1px;
  width: 88px;
  height: 11px;
  border-radius: 5px;
  background: #ff530c;
}

.feed {
  height: 46px;
  padding: 32px 0 0 42px;
  overflow: hidden;
  font-size: 47px;
  line-height: 60px;
  color: #444;
  background: linear-gradient(#fff 60%, #d8d8d8);
}

.feed em { color: #d4581f; }

.index-bar {
  height: 119px;
  padding-left: 53px;
  border-bottom: 3px solid #eee;
  background: #fff;
  display: flex;
  align-items: center;
}

.i-name { width: 261px; font-size: 45px; }
.i1 { width: 195px; }
.i2 { width: 202px; }
.i3 { width: 182px; }
.i4 { width: 254px; }
.index-bar svg { width: 38px; height: 24px; }

footer {
  flex: 1;
  padding: 27px 0 0 35px;
  display: flex;
}

.order {
  width: 448px;
  height: 123px;
  border: 0;
  border-radius: 62px;
  background: #ff530c;
  color: #fff;
  font-family: inherit;
  font-size: 55px;
}

.actions {
  width: 730px;
  margin-left: 27px;
  display: grid;
  grid-template-columns: repeat(4, 1fr);
}

.action {
  position: relative;
  display: flex;
  flex-direction: column;
  align-items: center;
  font-size: 38px;
  line-height: 46px;
  color: #999;
}

.action svg { width: 60px; height: 60px; margin: 2px 0 18px; }

.red-dot {
  position: absolute;
  left: 115px;
  top: -16px;
  width: 24px;
  height: 24px;
  border-radius: 50%;
  background: #f00;
}
```

FILE: script.js
```js
// x, top, side (r = up, g = down)
var peaks = [
  [41,1025,'g'],[53,912,'g'],[66,962,'g'],[70,975,'g'],[91,962,'r'],[102,862,'r'],[105,888,'g'],[126,888,'g'],[146,962,'r'],
  [163,975,'r'],[179,1000,'r'],[195,988,'g'],[201,912,'r'],[223,625,'g'],[237,875,'r'],[286,1025,'g'],[317,1000,'g'],[338,962,'r'],
  [360,1012,'r'],[382,950,'g'],[407,987,'r'],[418,875,'r'],[440,925,'g'],[451,950,'g'],[465,988,'g'],[478,988,'r'],
  [489,1012,'g'],[503,975,'r'],[509,1000,'g'],[536,1025,'r'],[572,938,'r'],[583,750,'r'],[597,812,'g'],[608,712,'r'],[605,350,'r'],
  [627,762,'g'],[638,700,'g'],[646,738,'g'],[657,750,'r'],[660,225,'r'],[682,712,'g'],[684,562,'g'],[688,325,'g'],[691,725,'g'],
  [720,825,'r'],[743,825,'g'],[756,900,'r'],[762,912,'g'],[765,912,'g'],[775,725,'r'],[817,900,'g'],[834,962,'r'],[864,788,'r'],
  [866,838,'g'],[880,912,'r'],[886,775,'r'],[892,912,'g'],[902,900,'g'],[916,900,'r'],[930,962,'g'],[938,962,'g'],[946,675,'g'],
  [952,575,'r'],[988,812,'g'],[993,888,'g'],[1001,912,'r'],[1015,962,'r'],[1029,912,'r'],[1037,812,'r'],[1062,912,'g'],
  [1073,938,'g'],[1082,950,'g'],[1099,925,'r'],[1106,938,'g'],[1120,800,'g'],[1136,912,'g'],[1152,788,'g'],[1163,888,'g'],
  [1166,938,'r'],[1183,675,'r'],[1187,788,'g'],[1205,725,'r'],[1219,875,'g'],[1224,800,'r'],[1229,538,'g'],[1238,800,'g'],
  [1248,985,'r'],[1258,1038,'r']
];

// end of range, highest ordinary bar in it
var levels = [
  [200,60],[245,70],[300,8],[400,25],[470,70],[560,25],[595,85],[720,190],
  [790,120],[860,45],[930,110],[1000,130],[1100,80],[1180,115],[1260,150]
];

var colors = { r: '#e8232a', g: '#22a43a' };
var out = '';

function bar(x, top, side) {
  out += '<rect x="' + (x - 3.5) + '" y="' + top + '" width="7" height="' + (1059 - top) + '" fill="' + colors[side] + '"/>';
}

var seed = 7;
function rnd() {
  seed = (seed * 1103515245 + 12345) % 2147483648;
  return seed / 2147483648;
}

for (var x = 41; x < 1258; x += 5.5) {
  var max = levels.find(function (l) { return x < l[0]; })[1];
  bar(x, 1059 - max * (0.15 + 0.85 * rnd()), rnd() > 0.5 ? 'r' : 'g');
}

peaks.forEach(function (p) { bar(p[0], p[1], p[2]); });

document.getElementById('bars').innerHTML = out;
```
